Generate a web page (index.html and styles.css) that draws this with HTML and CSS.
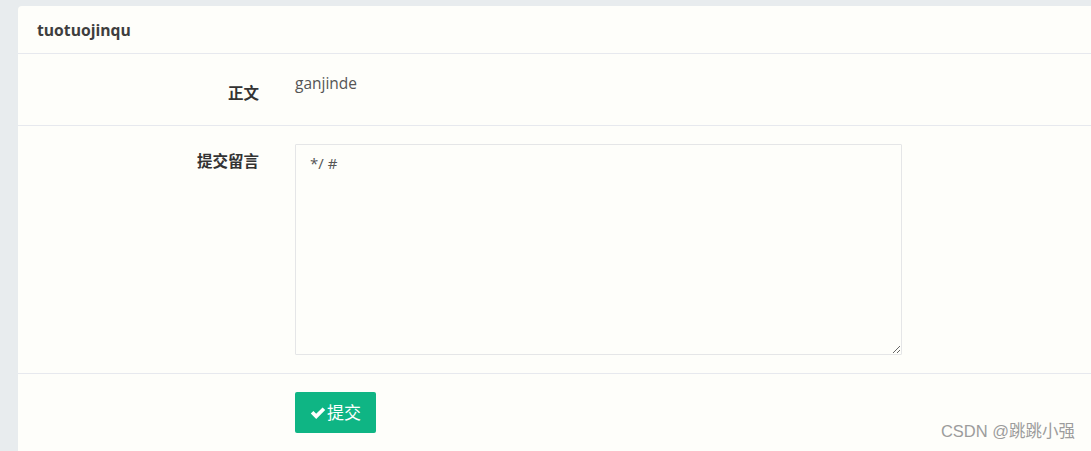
FILE: index.html
```html
<!DOCTYPE html>
<html>
<head>
<meta charset="utf-8">
<link rel="stylesheet" href="styles.css">
</head>
<body>
<div class="panel">
  <div class="panel-head">tuotuojinqu</div>
  <div class="row row-text">
    <div class="label serif">正文</div>
    <div class="value">ganjinde</div>
  </div>
  <div class="row row-msg">
    <div class="label">提交留言</div>
    <div class="field"><textarea class="area">*/ #</textarea></div>
  </div>
  <div class="row row-btn">
    <div class="label"></div>
    <div class="field">
      <button class="btn"><svg class="check" viewBox="0 0 16 16" width="16" height="16"><path d="M0.8 8.6 L3.4 6 L6.2 8.8 L12.6 2.4 L15.2 5 L6.2 14 Z" fill="#fff"/></svg>提交</button>
    </div>
  </div>
</div>
<div class="watermark">CSDN @跳跳小强</div>
</body>
</html>
```

FILE: styles.css
```css
html, body {
  margin: 0;
  padding: 0;
}
body {
  background: #e8ecee;
  font-family: "Open Sans", "Noto Sans CJK SC", sans-serif;
  color: #676a6c;
  height: 451px;
  overflow: hidden;
  position: relative;
}
.panel {
  margin: 6px 0 0 18px;
  background: #fefefa;
  border-top-left-radius: 4px;
  min-height: 460px;
}
.panel-head {
  height: 48px;
  box-sizing: border-box;
  border-bottom: 1px solid #e7e9ee;
  padding: 15px 0 0 19px;
  font-size: 15.7px;
  font-weight: 700;
  color: #3e3e3e;
  line-height: 18px;
}
.row {
  display: grid;
  grid-template-columns: 241px 1fr;
  column-gap: 36px;
  border-bottom: 1px solid #e7e9ee;
  box-sizing: border-box;
}
.row-text {
  height: 72px;
  padding-top: 19px;
}
.row-msg {
  height: 248px;
  padding-top: 18px;
}
.row-btn {
  border-bottom: none;
  padding-top: 18px;
}
.label {
  text-align: right;
  font-family: "Noto Sans CJK SC", sans-serif;
  font-weight: 700;
  font-size: 15.5px;
  color: #333;
  padding-top: 6px;
  line-height: 20px;
}
.row-text .label {
  padding-top: 9px;
}
.value {
  font-size: 15.5px;
  line-height: 20px;
  color: #555;
}
.area {
  display: block;
  width: 607px;
  height: 211px;
  box-sizing: border-box;
  border: 1px solid #e5e6e7;
  border-radius: 1px;
  background: #fefefa;
  padding: 8px 14px;
  font-family: "Open Sans", sans-serif;
  font-size: 15px;
  line-height: 20px;
  color: #555;
  resize: vertical;
  margin: 0;
  outline: none;
}
.btn {
  width: 81px;
  height: 41px;
  border: none;
  border-radius: 2px;
  background: #0fb584;
  color: #fff;
  font-family: "Noto Sans CJK SC", sans-serif;
  font-size: 17px;
  display: flex;
  align-items: center;
  justify-content: center;
  padding: 0 0 2px 0;
  gap: 1px;
}
.check {
  display: block;
  margin-top: 2px;
}
.watermark {
  position: absolute;
  right: 16px;
  bottom: 9px;
  font-family: "Liberation Sans", "Noto Sans CJK SC", sans-serif;
  font-size: 16.5px;
  color: #9c9c9c;
}
```
